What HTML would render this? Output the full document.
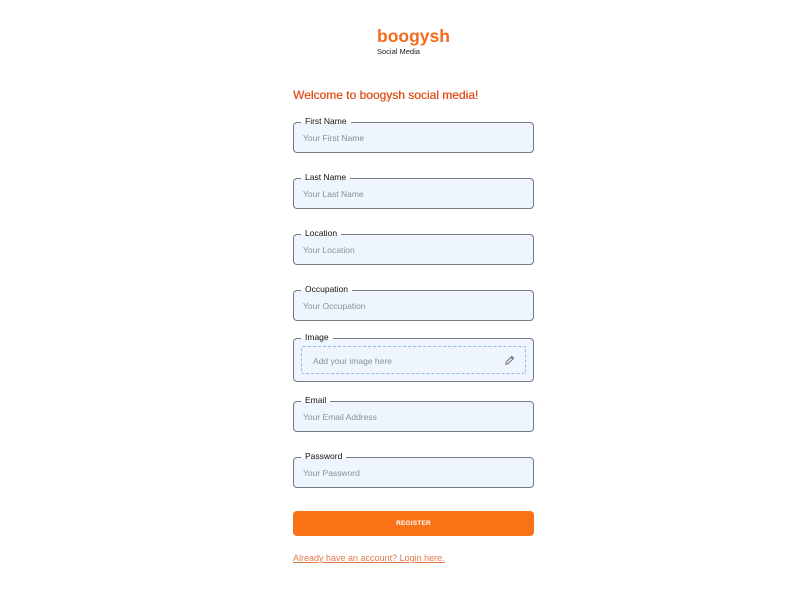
<!DOCTYPE html>
<html><head><meta charset="utf-8"><style>
*{margin:0;padding:0;box-sizing:border-box}
body{width:800px;height:600px;background:#fff;font-family:"Liberation Sans",sans-serif;position:relative;overflow:hidden}
.a{position:absolute}
.logo{left:377px;top:26px;font-size:17.5px;font-weight:bold;color:#f26b1d}
.sub{left:377px;top:47px;font-size:7.5px;color:#222}
.welcome{left:293px;top:88px;font-size:12px;color:#e0501a;text-shadow:0.3px 0 0 #e0501a}
.box{position:absolute;left:293px;width:241px;height:31px;border:1px solid #737a86;border-radius:4px;background:#eef5ff}
.box .ph{position:absolute;left:9px;top:10px;font-size:8.5px;color:#8a8f98}
.lbl{position:absolute;left:7px;top:-8px;background:#fff;padding:0 4px;font-size:8.5px;color:#111;line-height:12px;height:8px;overflow:visible}
.dash{position:absolute;left:7px;top:7px;right:7px;bottom:7px;border:1px dashed #8fbbe8;border-radius:2px}
.btn{left:293px;top:511px;width:241px;height:25px;background:#f97316;border-radius:4px;color:#fff;font-size:6.5px;font-weight:bold;text-align:center;line-height:25px;letter-spacing:0.2px}
.link{left:293px;top:553px;font-size:9px;color:#e07a4a;text-decoration:underline}
</style></head><body>
<div class="a logo">boogysh</div>
<div class="a sub">Social Media</div>
<div class="a welcome">Welcome to boogysh social media!</div>

<div class="box" style="top:122px"><div class="lbl">First Name</div><div class="ph">Your First Name</div></div>
<div class="box" style="top:178px"><div class="lbl">Last Name</div><div class="ph">Your Last Name</div></div>
<div class="box" style="top:234px"><div class="lbl">Location</div><div class="ph">Your Location</div></div>
<div class="box" style="top:290px"><div class="lbl">Occupation</div><div class="ph">Your Occupation</div></div>
<div class="box" style="top:338px;height:44px"><div class="lbl">Image</div><div class="dash"></div><div class="ph" style="left:19px;top:17px">Add your image here</div>
<svg class="a" style="left:210px;top:16px" width="11" height="11" viewBox="0 0 12 12"><path d="M2 10 L2.5 7.5 L8.5 1.5 L10.5 3.5 L4.5 9.5 Z M7.5 2.5 L9.5 4.5" fill="none" stroke="#666" stroke-width="1"/></svg></div>
<div class="box" style="top:401px"><div class="lbl">Email</div><div class="ph">Your Email Address</div></div>
<div class="box" style="top:457px"><div class="lbl">Password</div><div class="ph">Your Password</div></div>

<div class="a btn">REGISTER</div>
<div class="a link">Already have an account? Login here.</div>
</body></html>
